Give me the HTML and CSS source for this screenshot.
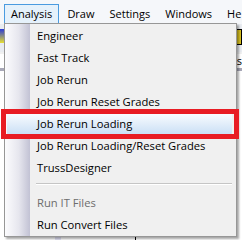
FILE: index.html
```html
<!DOCTYPE html>
<html lang="en">
<head>
  <meta charset="UTF-8">
  <title>Analysis menu</title>
  <link rel="stylesheet" href="styles.css">
</head>
<body>
  <div class="window">
    <!-- Menu bar -->
    <div class="menubar">
      <span class="menu-title active">Analysis</span>
      <span class="menu-title">Draw</span>
      <span class="menu-title">Settings</span>
      <span class="menu-title">Windows</span>
      <span class="menu-title">He</span>
    </div>

    <!-- Toolbar / workspace behind the open menu -->
    <div class="workspace">
      <div class="toolbar">
        <span class="tool tool-a"></span>
        <span class="tool tool-b"></span>
      </div>
      <div class="field">s</div>
      <div class="canvas">
        <span class="col-strip"></span>
        <span class="col-line"></span>
      </div>
    </div>

    <!-- Dropdown -->
    <div class="dropdown">
      <div class="gutter"></div>
      <div class="item">Engineer</div>
      <div class="item">Fast Track</div>
      <div class="item">Job Rerun</div>
      <div class="item">Job Rerun Reset Grades</div>
      <div class="item hover">Job Rerun Loading</div>
      <div class="item">Job Rerun Loading/Reset Grades</div>
      <div class="item">TrussDesigner</div>
      <div class="separator"></div>
      <div class="item disabled">Run IT Files</div>
      <div class="item">Run Convert Files</div>
    </div>

    <!-- Annotation -->
    <div class="callout"></div>
  </div>
</body>
</html>
```

FILE: styles.css
```css
body {
  margin: 0;
  padding: 0;
  font-family: 'Open Sans', 'Noto Sans', sans-serif;
  font-size: 11.2px;
  color: #000;
  background-color: #f0f0f0;
}

.window {
  position: relative;
  width: 242px;
  height: 240px;
  overflow: hidden;
}

/* menu bar */
.menubar {
  display: flex;
  height: 24px;
  padding: 4px 0 0 4px;
  box-sizing: border-box;
  background-color: #f5f7fa;
  white-space: nowrap;
  font-size: 11px;
}

.menu-title {
  height: 18px;
  line-height: 18px;
  padding: 0 6px;
  margin-right: 1px;
  border: 1px solid transparent;
}

.menu-title.active {
  background-color: #e5f1fb;
  border-color: #4a9be0;
  border-bottom: none;
  height: 19px;
}

/* stuff behind the menu */
.workspace {
  height: 216px;
  background-color: #f0f0f0;
}

.toolbar {
  display: flex;
  justify-content: space-between;
  height: 28px;
  padding: 3px 0;
  box-sizing: border-box;
  background-color: #e9ecf1;
}

.tool {
  width: 8px;
  height: 14px;
  margin-top: 2px;
}

.tool-a { background: linear-gradient(#2a3ad8, #e8e030); }
.tool-b { background: linear-gradient(90deg, #222 0 40%, #d8c020 40%); border: 1px solid #000; }

.field {
  height: 14px;
  margin-top: 2px;
  background-color: #fff;
  text-align: right;
  font-size: 11px;
  line-height: 14px;
}

.canvas {
  position: relative;
  height: 170px;
  background-color: #fff;
  border-top: 3px solid #a8a8b8;
}

.col-strip {
  position: absolute;
  left: 55px;
  bottom: 0;
  width: 6px;
  height: 12px;
  background-color: #e4e4f8;
}

.col-line {
  position: absolute;
  left: 135px;
  bottom: 0;
  width: 1px;
  height: 8px;
  background-color: #000;
}

/* dropdown */
.dropdown {
  position: absolute;
  left: 4px;
  top: 23px;
  width: 233px;
  padding: 1px 0 0 0;
  box-sizing: border-box;
  background-color: #f0f0f0;
  border: 1px solid #979797;
  box-shadow: 2px 2px 2px rgba(0, 0, 0, 0.35);
}

.gutter {
  position: absolute;
  left: 0;
  top: 0;
  bottom: 0;
  width: 25px;
  background: linear-gradient(90deg, #fcfcfe, #e6e6ee 55%, #c2c2d4);
}

.item {
  position: relative;
  height: 22px;
  line-height: 21px;
  padding-left: 30px;
  margin: 0 2px;
  white-space: nowrap;
}

.item.hover {
  background: linear-gradient(#fbfdff, #c8def5);
  border-radius: 2px;
  margin-right: 4px;
}

.item.disabled {
  color: #6d6d6d;
}

.separator {
  position: relative;
  height: 9px;
  margin-left: 31px;
  margin-right: 4px;
}

.separator::after {
  content: "";
  display: block;
  height: 1px;
  margin-top: 4px;
  background-color: #c5c5c5;
  border-bottom: 1px solid #fff;
}

/* red annotation box */
.callout {
  position: absolute;
  left: 1px;
  top: 109px;
  width: 238px;
  height: 30px;
  box-sizing: border-box;
  border: 5px solid #e81c24;
}
```
